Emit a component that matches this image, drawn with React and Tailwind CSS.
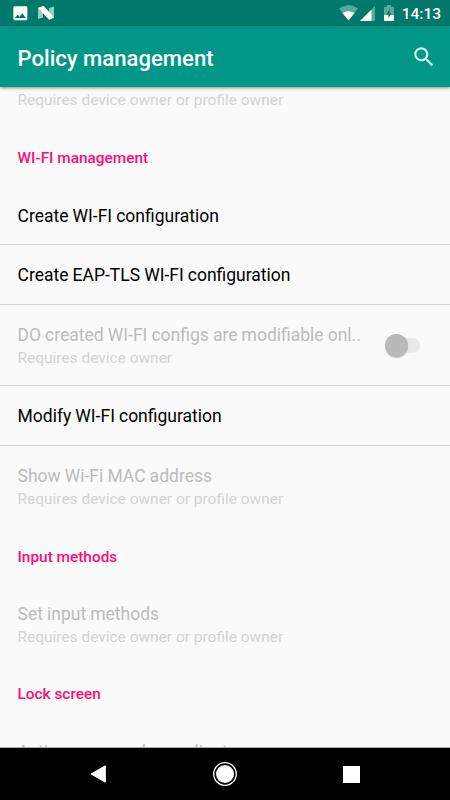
import React, { useState } from "react";
import { MdImage, MdSearch } from "react-icons/md";

const NougatIcon = () => (
  <svg width="16" height="14" viewBox="0 0 16 14">
    <path d="M0 1.5L5 0V11.5L0 13Z" fill="#fff" fillOpacity="0.6" />
    <path d="M11 2L16 0.5V12L11 13.5Z" fill="#fff" fillOpacity="0.6" />
    <path d="M0 2.2L5.6 0L16 11.2L11.2 13.8Z" fill="#fff" />
  </svg>
);

const WifiIcon = () => (
  <svg width="19" height="16" viewBox="0 0 19 16">
    <path d="M0 3.6Q9.5 -3.6 19 3.6L9.5 15.5Z" fill="#fff" fillOpacity="0.35" />
    <path d="M3.5 7.9Q9.5 4.4 15.5 7.9L9.5 15.5Z" fill="#fff" />
  </svg>
);

const SignalIcon = () => (
  <svg width="15" height="15" viewBox="0 0 15 15">
    <path d="M0 15L15 0V15Z" fill="#fff" fillOpacity="0.35" />
    <path d="M0 15L11.5 3.5V15Z" fill="#fff" />
  </svg>
);

const BatteryIcon = () => (
  <svg width="10" height="16" viewBox="0 0 10 16">
    <path d="M3 0H7V1.7H10V10H0V1.7H3Z" fill="#fff" fillOpacity="0.35" />
    <path d="M0 10H10V15Q10 16 9 16H1Q0 16 0 15Z" fill="#fff" />
    <path d="M5.5 4L2.6 9.5H4.5V13.3L7.5 8.2H5.5Z" fill="#00796b" />
  </svg>
);

const Category = ({ title, className = "h-[57px]" }) => (
  <h2
    className={`${className} shrink-0 px-[17.5px] pt-[19.5px] text-[15.4px] leading-5 font-medium text-[#ff0d74]`}
  >
    {title}
  </h2>
);

const Preference = ({ title, summary, disabled, className, children }) => (
  <div className={`${className} flex shrink-0 items-center pr-[30px] pl-[17.5px]`}>
    <div className="min-w-0 flex-1 pt-[2px]">
      {title && (
        <p
          className={`text-[17.5px] leading-[23px] whitespace-nowrap [word-spacing:-0.25px] ${
            disabled ? "text-[#bcbcbc]" : "text-black"
          }`}
        >
          {title}
        </p>
      )}
      {summary && (
        <p className="text-[15.47px] leading-[22px] whitespace-nowrap text-[#d3d3d3]">
          {summary}
        </p>
      )}
    </div>
    {children}
  </div>
);

const App = () => {
  const [checked] = useState(false);

  return (
    <div className="flex h-[800px] w-[450px] flex-col overflow-hidden bg-[#fafafa] font-['Roboto',sans-serif]">
      {/* Status bar */}
      <div className="flex h-[26px] shrink-0 items-center bg-[#00786a] pr-[9px] pl-[11px] text-white">
        <MdImage className="size-[18.7px]" />
        <div className="ml-[8px] flex-1">
          <NougatIcon />
        </div>
        <WifiIcon />
        <div className="ml-[2px] pt-px">
          <SignalIcon />
        </div>
        <div className="ml-[9px]">
          <BatteryIcon />
        </div>
        <span className="ml-[8px] pt-[2px] text-[15.5px] leading-5 font-medium">14:13</span>
      </div>

      {/* Toolbar */}
      <header className="z-10 flex h-[61px] shrink-0 items-center justify-between bg-[#009688] pr-[13px] pl-[17.5px] shadow-[0_1px_3px_rgba(0,0,0,0.45)]">
        <h1 className="pt-[2px] text-[22.1px] leading-7 font-medium text-white">
          Policy management
        </h1>
        <button aria-label="Search">
          <MdSearch className="size-[26px] text-[#d9efed]" />
        </button>
      </header>

      {/* Preference list */}
      <main className="flex min-h-0 flex-1 flex-col justify-start overflow-hidden border-b border-[#a8a8a8]">
        <Preference
          summary="Requires device owner or profile owner"
          disabled
          className="h-[41px] pb-[17px]"
        />

        <Category title="WI-FI management" className="h-[58px]" />
        <Preference
          title="Create WI-FI configuration"
          className="h-[59px] border-b border-[#d3d3d3]"
        />
        <Preference
          title="Create EAP-TLS WI-FI configuration"
          className="h-[60px] border-b border-[#d3d3d3]"
        />
        <Preference
          title="DO created WI-FI configs are modifiable onl.."
          summary="Requires device owner"
          disabled
          className="h-[81px] border-b border-[#d3d3d3]"
        >
          <button
            role="switch"
            aria-checked={checked}
            aria-label="DO created WI-FI configs are modifiable only by DO"
            className="flex h-[15px] w-[35px] items-center rounded-full bg-[#e9e9e9]"
          >
            <span className="size-[23px] shrink-0 rounded-full bg-[#b9b9b9] shadow-[0_1px_1px_rgba(0,0,0,0.18)]" />
          </button>
        </Preference>
        <Preference
          title="Modify WI-FI configuration"
          className="h-[60px] border-b border-[#d3d3d3]"
        />
        <Preference
          title="Show Wi-Fi MAC address"
          summary="Requires device owner or profile owner"
          disabled
          className="h-[81px]"
        />

        <Category title="Input methods" />
        <Preference
          title="Set input methods"
          summary="Requires device owner or profile owner"
          disabled
          className="h-[80px]"
        />

        <Category title="Lock screen" className="h-[58px]" />
        <Preference
          title="Active password compliant"
          disabled
          className="h-[59px]"
        />
      </main>

      {/* Navigation bar */}
      <nav className="flex h-[52px] shrink-0 items-center justify-between bg-black pr-[90px] pl-[90px]">
        <svg width="16" height="20" viewBox="0 0 16 20">
          <path d="M1 10L15.3 1.8V18.2Z" fill="#fff" stroke="#fff" strokeLinejoin="round" />
        </svg>
        <svg width="24" height="24" viewBox="0 0 24 24">
          <circle cx="12" cy="12" r="11.3" fill="none" stroke="#fff" strokeWidth="1.3" />
          <circle cx="12" cy="12" r="9" fill="#fff" />
        </svg>
        <div className="size-[17px] bg-white" />
      </nav>
    </div>
  );
};

export default App;
